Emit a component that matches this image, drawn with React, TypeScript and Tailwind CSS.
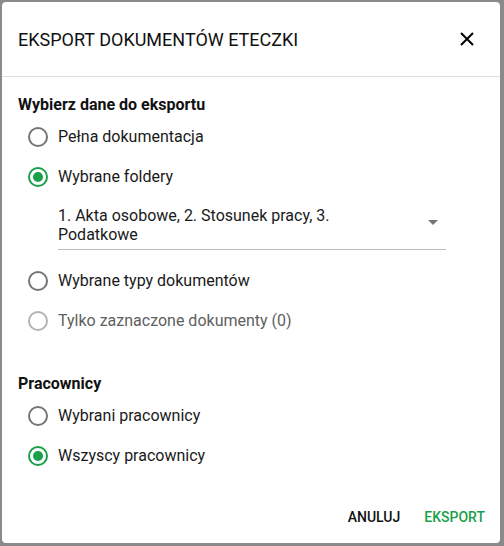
import React from 'react';

function Radio({ label, checked, disabled }: { label: string; checked?: boolean; disabled?: boolean }) {
  return (
    <label className="flex h-10 items-center">
      <span className="flex w-10 shrink-0 justify-center">
        <span
          className={`flex h-5 w-5 items-center justify-center rounded-full border-2 ${
            checked ? 'border-[#1a9f4b]' : disabled ? 'border-[#b3b3b3]' : 'border-[#757575]'
          }`}
        >
          {checked && <span className="h-[10px] w-[10px] rounded-full bg-[#1a9f4b]" />}
        </span>
      </span>
      <span className={`text-[16px] ${disabled ? 'text-[#606060]' : 'text-[#1a1a1a]'}`}>{label}</span>
    </label>
  );
}

export default function App() {
  return (
    <div className="h-[546px] w-[504px] bg-[#8a8a8a] pb-[3px] pl-[2px] pr-[4px] pt-[2px] font-['Roboto',sans-serif]">
      <div className="flex h-full flex-col rounded-[4px] bg-white">
        {/* Header */}
        <div className="flex h-[75px] items-center justify-between border-b border-[#dedede] pl-4 pr-[26px]">
          <h1 className="text-[18px] text-[#111]">EKSPORT DOKUMENTÓW ETECZKI</h1>
          <svg width="14" height="14" viewBox="0 0 14 14" className="text-black">
            <path d="M1 1L13 13M13 1L1 13" stroke="currentColor" strokeWidth="2" />
          </svg>
        </div>

        {/* Content */}
        <div className="flex flex-1 flex-col px-4 pt-[16px]">
          <h2 className="text-[16px] font-bold leading-[24px] text-[#111]">Wybierz dane do eksportu</h2>
          <div>
            <Radio label="Pełna dokumentacja" />
            <Radio label="Wybrane foldery" checked />
            <div className="ml-10 mr-[38px] mt-[8px] flex items-start border-b border-[#bdbdbd] pb-[5px] pt-[1px]">
              <span className="flex-1 pr-8 text-[16px] leading-[19px] text-[#1a1a1a]">
                1. Akta osobowe, 2. Stosunek pracy, 3. Podatkowe
              </span>
              <svg width="10" height="5" viewBox="0 0 10 5" className="mr-[8px] mt-[14px] shrink-0">
                <path d="M0 0L10 0L5 5Z" fill="#757575" />
              </svg>
            </div>
            <div className="h-[11px]" />
            <Radio label="Wybrane typy dokumentów" />
            <Radio label="Tylko zaznaczone dokumenty (0)" disabled />
          </div>

          <h2 className="mt-[31px] text-[16px] font-bold leading-[24px] text-[#111]">Pracownicy</h2>
          <div>
            <Radio label="Wybrani pracownicy" />
            <Radio label="Wszyscy pracownicy" checked />
          </div>
        </div>

        {/* Actions */}
        <div className="flex items-center justify-end gap-[8px] pb-[8px] pl-[8px] pr-[7px]">
          <button className="h-9 px-2 text-[14px] font-medium text-[#111]">ANULUJ</button>
          <button className="h-9 px-2 text-[14px] font-medium text-[#1a9f4b]">EKSPORT</button>
        </div>
      </div>
    </div>
  );
}
